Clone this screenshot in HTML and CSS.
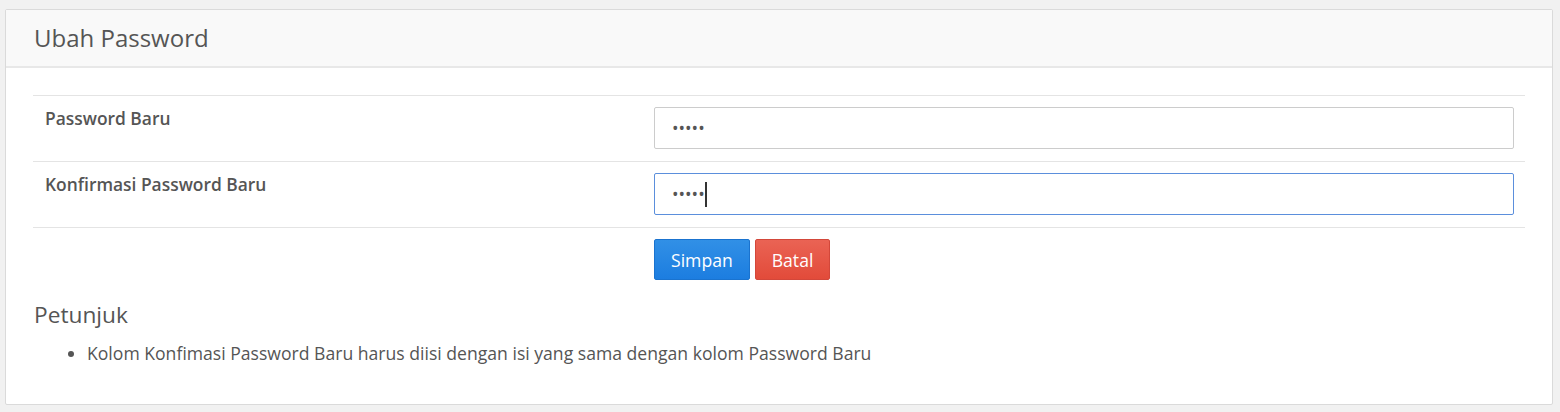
FILE: index.html
```html
<!DOCTYPE html>
<html lang="id">
<head>
<meta charset="utf-8">
<title>Ubah Password</title>
<link rel="stylesheet" href="styles.css">
</head>
<body>
<div class="page">
  <div class="panel">
    <div class="panel-head">
      <h3 class="panel-title">Ubah Password</h3>
    </div>
    <div class="panel-body">
      <div class="form-table">
        <div class="row">
          <div class="cell label">Password Baru</div>
          <div class="cell field"><input class="input" type="password" value="12345"></div>
        </div>
        <div class="row">
          <div class="cell label">Konfirmasi Password Baru</div>
          <div class="cell field"><div class="input input-focus"><span class="dots">•••••</span><span class="caret"></span></div></div>
        </div>
        <div class="row row-actions">
          <div class="cell"></div>
          <div class="cell field actions">
            <button class="btn btn-primary" type="button">Simpan</button>
            <button class="btn btn-danger" type="button">Batal</button>
          </div>
        </div>
      </div>
      <h4 class="hint-title">Petunjuk</h4>
      <ul class="hint-list">
        <li>Kolom Konfimasi Password Baru harus diisi dengan isi yang sama dengan kolom Password Baru</li>
      </ul>
    </div>
  </div>
</div>
</body>
</html>
```
FILE: styles.css
```css
html, body {
  margin: 0;
  padding: 0;
}
body {
  background: #f1f1f1;
  font-family: "Open Sans", "Noto Sans", sans-serif;
  color: #555;
  font-size: 17.5px;
}
.page {
  padding: 9px 7px 7px 5px;
}
.panel {
  background: #fff;
  border: 1px solid #dadada;
  border-radius: 2px;
}
.panel-head {
  background: #f9f9f9;
  border-bottom: 2px solid #e8e8e8;
  height: 58px;
  box-sizing: border-box;
  padding: 0 28px;
  display: flex;
  align-items: center;
}
.panel-title {
  margin: 0;
  font-size: 24px;
  font-weight: 400;
  color: #555;
  line-height: 1;
}
.panel-body {
  padding: 27px 27px 38px 27px;
}
.form-table {
  border-top: 1px solid #e4e4e4;
}
.row {
  display: grid;
  grid-template-columns: 609px 1fr;
  border-bottom: 1px solid #e4e4e4;
}
.row-actions {
  border-bottom: none;
}
.cell {
  padding: 11px 11px 12px 12px;
}
.label {
  font-weight: 600;
  font-size: 17.4px;
  line-height: 24px;
  color: #555;
  padding-top: 10px;
}
.input {
  display: flex;
  align-items: center;
  width: 100%;
  height: 42px;
  box-sizing: border-box;
  border: 1px solid #ccc;
  border-radius: 2px;
  padding: 0 17px;
  font-family: "Open Sans", sans-serif;
  font-size: 17.4px;
  color: #555;
  background: #fff;
  outline: none;
  letter-spacing: 0;
}
.input-focus {
  border-color: #5b8fdc;
}
.dots {
  font-size: 17.4px;
  color: #555;
}
.caret {
  display: inline-block;
  width: 2px;
  height: 25px;
  background: #333;
  margin-left: 0;
}
.actions {
  display: flex;
  gap: 5px;
  padding-top: 11px;
}
.btn {
  height: 41px;
  border-radius: 2px;
  font-family: "Open Sans", sans-serif;
  font-size: 17.6px;
  color: #fff;
  padding: 0 16px;
  cursor: pointer;
}
.btn-primary {
  background: linear-gradient(#3190e6, #1c7de0);
  border: 1px solid #1a73cf;
}
.btn-danger {
  background: linear-gradient(#ea6354, #e24b3a);
  border: 1px solid #d3473a;
}
.hint-title {
  margin: 8px 0 0 1px;
  font-size: 22.7px;
  font-weight: 400;
  color: #555;
  line-height: 30px;
}
.hint-list {
  margin: 11px 0 0 0;
  padding-left: 54px;
  font-size: 17.6px;
  line-height: 25px;
  color: #555;
}
```
